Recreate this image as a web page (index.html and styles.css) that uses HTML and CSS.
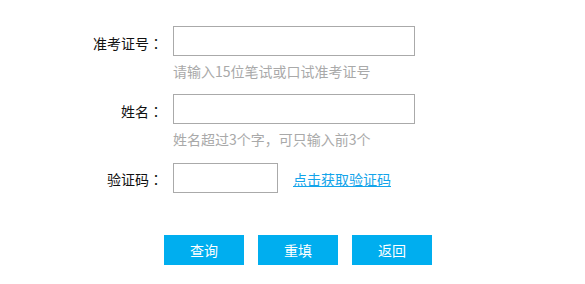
FILE: index.html
```html
<!DOCTYPE html>
<html lang="zh-CN">
<head>
<meta charset="utf-8">
<title>查询</title>
<link rel="stylesheet" href="styles.css">
</head>
<body>
<div class="page">
  <form class="form">
    <div class="row">
      <label class="label">准考证号<span class="colon" lang="zh-TW">：</span></label>
      <div class="field">
        <input class="input" type="text">
        <div class="hint">请输入15位笔试或口试准考证号</div>
      </div>
    </div>
    <div class="row">
      <label class="label">姓名<span class="colon" lang="zh-TW">：</span></label>
      <div class="field">
        <input class="input" type="text">
        <div class="hint">姓名超过3个字，可只输入前3个</div>
      </div>
    </div>
    <div class="row">
      <label class="label">验证码<span class="colon" lang="zh-TW">：</span></label>
      <div class="field captcha">
        <input class="input input-small" type="text">
        <a class="link" href="#">点击获取验证码</a>
      </div>
    </div>
    <div class="buttons">
      <button class="btn" type="button">查询</button>
      <button class="btn" type="button">重填</button>
      <button class="btn" type="button">返回</button>
    </div>
  </form>
</div>
</body>
</html>
```
FILE: styles.css
```css
* { box-sizing: border-box; }
html, body {
  margin: 0;
  padding: 0;
  background: #fff;
}
body {
  font-family: "Noto Sans CJK SC", "Noto Sans", sans-serif;
  font-size: 14px;
  color: #111;
}
.page {
  padding-top: 26px;
}
.row {
  display: grid;
  grid-template-columns: 163px auto;
  column-gap: 10px;
  margin-bottom: 8px;
}
.label {
  text-align: right;
  line-height: 30px;
  height: 30px;
  padding-top: 2px;
}
.colon {
  display: inline-block;
  width: 14px;
  text-align: center;
  font-family: "Noto Sans CJK TC", "Noto Sans CJK SC", sans-serif;
}
.field {
  display: flex;
  flex-direction: column;
  align-items: flex-start;
}
.input {
  width: 242px;
  height: 30px;
  border: 1px solid #aaa;
  margin: 0;
  padding: 0 6px;
  font: inherit;
  outline: none;
  background: #fff;
}
.input-small {
  width: 105px;
}
.hint {
  color: #a9a9a9;
  line-height: 30px;
}
.captcha {
  flex-direction: row;
  align-items: center;
  gap: 15px;
}
.link {
  color: #13a4ea;
  text-decoration: underline;
  line-height: 30px;
  padding-top: 2px;
}
.buttons {
  display: flex;
  gap: 14px;
  padding-left: 164px;
  margin-top: 41px;
}
.btn {
  width: 80px;
  height: 30px;
  border: none;
  margin: 0;
  padding: 0;
  background: #00aeef;
  color: #fff;
  font: inherit;
  font-size: 14px;
  cursor: pointer;
}
```
